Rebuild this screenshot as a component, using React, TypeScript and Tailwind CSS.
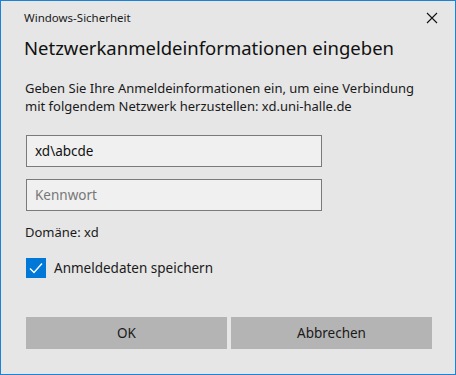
import { useState } from "react";

export default function App() {
  const [save, setSave] = useState(true);

  return (
    <div
      className="w-[456px] h-[375px] border border-[#1883d7] bg-[#e6e6e6] text-[#000] flex flex-col"
      style={{ fontFamily: '"Noto Sans", "Open Sans", sans-serif' }}
    >
      {/* Title bar */}
      <div className="h-[33px] flex items-center justify-between pl-[23px] pr-[16px]">
        <span className="text-[11.5px] text-[#1a1a1a]">Windows-Sicherheit</span>
        <svg width="12" height="12" viewBox="0 0 12 12" className="mr-[1px]">
          <path d="M1 1 L11 11 M11 1 L1 11" stroke="#111" strokeWidth="1.1" />
        </svg>
      </div>

      <div className="flex flex-col pl-[24px] pr-[24px]">
        <h1 className="text-[18.5px] leading-[28px] font-normal text-[#111] -ml-[1px] whitespace-nowrap">
          Netzwerkanmeldeinformationen eingeben
        </h1>

        <p className="mt-[17px] text-[13px] leading-[18px] text-[#1a1a1a] whitespace-nowrap">
          Geben Sie Ihre Anmeldeinformationen ein, um eine Verbindung
          <br />
          mit folgendem Netzwerk herzustellen: xd.uni-halle.de
        </p>

        <input
          defaultValue="xd\abcde"
          className="mt-[20px] w-[296px] h-[32px] border border-[#7a7a7a] bg-[#f0f0f0] px-[8px] text-[13.5px] text-[#111] outline-none ml-[1px]"
        />
        <input
          placeholder="Kennwort"
          type="password"
          className="mt-[12px] w-[296px] h-[32px] border border-[#7a7a7a] bg-[#f0f0f0] px-[8px] text-[13.5px] text-[#111] placeholder:text-[#777] outline-none ml-[1px]"
        />

        <div className="mt-[12px] text-[13px] leading-[18px] text-[#1a1a1a]">Domäne: xd</div>

        <label className="mt-[17px] flex items-center gap-[8px] ml-[1px] cursor-default">
          <button
            onClick={() => setSave(!save)}
            className={`w-[20px] h-[20px] flex items-center justify-center ${save ? "bg-[#0078d7]" : "bg-white border border-[#333]"}`}
          >
            {save && (
              <svg width="14" height="12" viewBox="0 0 14 12">
                <path d="M1 6.5 L5 10.5 L13 1.5" stroke="#fff" strokeWidth="1.4" fill="none" />
              </svg>
            )}
          </button>
          <span className="text-[13.5px] text-[#1a1a1a]">Anmeldedaten speichern</span>
        </label>

        <div className="mt-[39px] ml-[1px] flex gap-[4px] w-[406px]">
          <button className="flex-1 h-[32px] bg-[#b4b4b4] text-[13.5px] text-[#1a1a1a]">OK</button>
          <button className="flex-1 h-[32px] bg-[#b4b4b4] text-[13.5px] text-[#1a1a1a]">Abbrechen</button>
        </div>
      </div>
    </div>
  );
}
